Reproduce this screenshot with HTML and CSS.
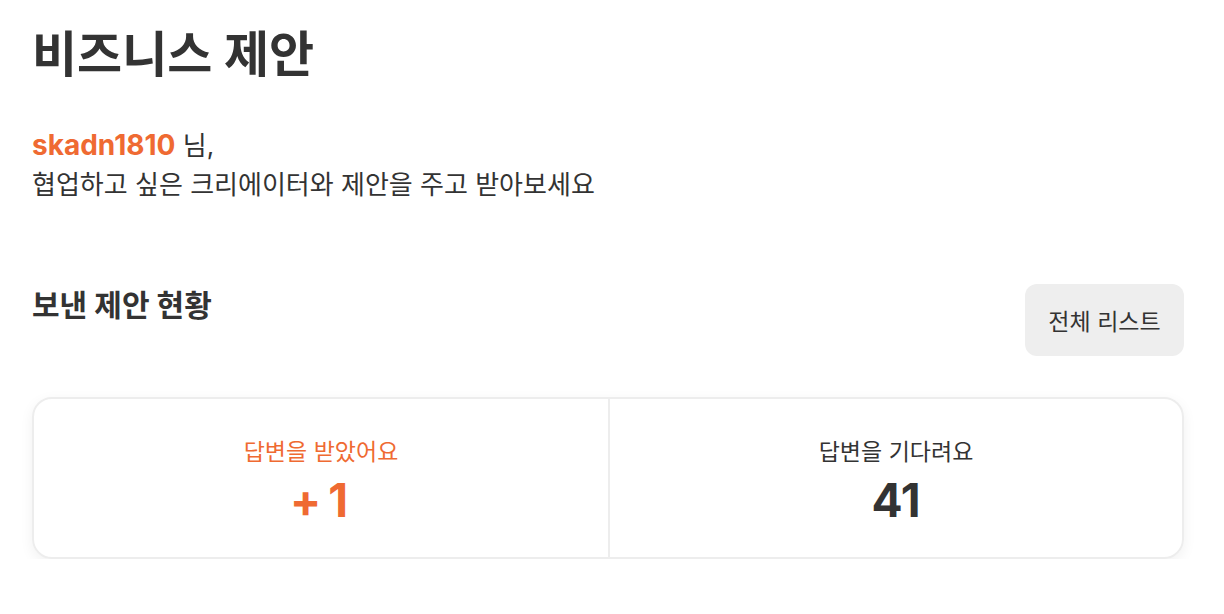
FILE: index.html
```html
<!DOCTYPE html>
<html lang="ko">
<head>
<meta charset="utf-8">
<link rel="stylesheet" href="styles.css">
</head>
<body>
<main class="page">
  <h1 class="title">비즈니스 제안</h1>
  <p class="greeting"><span class="user">skadn1810</span> 님,<br>협업하고 싶은 크리에이터와 제안을 주고 받아보세요</p>
  <div class="section-head">
    <h2 class="section-title">보낸 제안 현황</h2>
    <button class="btn-list">전체 리스트</button>
  </div>
  <div class="stats">
    <div class="stat">
      <div class="stat-label accent">답변을 받았어요</div>
      <div class="stat-value accent">+ 1</div>
    </div>
    <div class="stat">
      <div class="stat-label">답변을 기다려요</div>
      <div class="stat-value">41</div>
    </div>
  </div>
</main>
</body>
</html>
```

FILE: styles.css
```css
* { box-sizing: border-box; }
body {
  margin: 0;
  background: #fff;
  color: #333;
  font-family: Inter, "Noto Sans CJK KR", sans-serif;
}
.page {
  padding: 20px 40px 0 32px;
}
.title {
  margin: 0;
  font-size: 49px;
  font-weight: 700;
  line-height: 70px;
}
.greeting {
  margin: 36px 0 0;
  font-size: 26px;
  line-height: 39px;
}
.user {
  color: #ef6a32;
  font-weight: 700;
  font-size: 28px;
}
.section-head {
  margin-top: 80px;
  display: flex;
  justify-content: space-between;
  align-items: flex-start;
}
.section-title {
  margin: 0;
  font-size: 30px;
  font-weight: 700;
  line-height: 42px;
}
.btn-list {
  width: 159px;
  height: 72px;
  border: none;
  border-radius: 12px;
  background: #eeeeee;
  color: #333;
  font-family: inherit;
  font-size: 23px;
}
.stats {
  margin-top: 41px;
  display: grid;
  grid-template-columns: 1fr 1fr;
  height: 162px;
  border: 2px solid #ededed;
  border-radius: 20px;
  box-shadow: 0 4px 14px rgba(0, 0, 0, 0.06);
}
.stat {
  display: flex;
  flex-direction: column;
  align-items: center;
  justify-content: center;
  padding-top: 6px;
}
.stat + .stat {
  border-left: 2px solid #ededed;
}
.stat-label {
  font-size: 23px;
  line-height: 30px;
}
.stat-value {
  font-size: 46px;
  font-weight: 700;
  line-height: 50px;
  margin-top: 8px;
}
.stat-value.accent { letter-spacing: -2px; margin-right: 6px; }
.accent { color: #ef6a32; }
```
